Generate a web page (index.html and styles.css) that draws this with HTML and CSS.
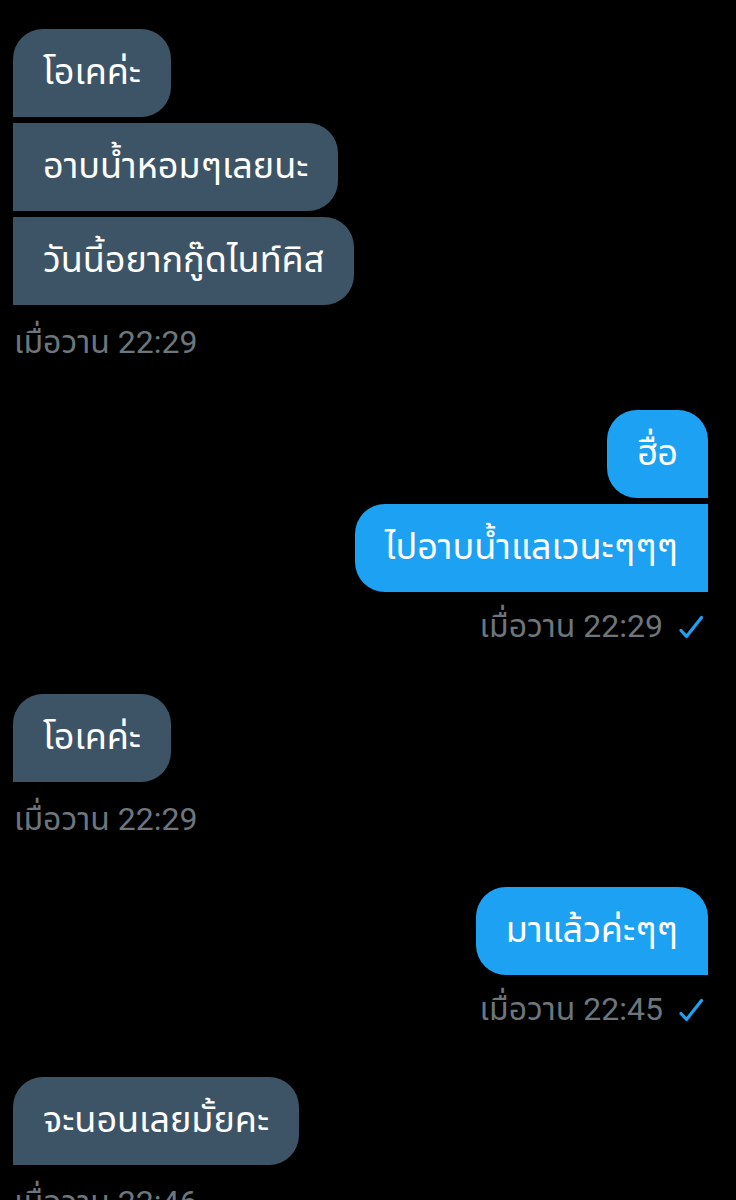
FILE: index.html
```html
<!DOCTYPE html>
<html lang="th">
<head>
  <meta charset="UTF-8">
  <title>Messages</title>
  <link rel="stylesheet" href="styles.css">
</head>
<body>
  <div class="chat">
    <div class="group received">
      <div class="bubble first">โอเคค่ะ</div>
      <div class="bubble">อาบน้ำหอมๆเลยนะ</div>
      <div class="bubble">วันนี้อยากกู๊ดไนท์คิส</div>
      <div class="time">เมื่อวาน 22:29</div>
    </div>

    <div class="group sent">
      <div class="bubble first">ฮื่อ</div>
      <div class="bubble">ไปอาบน้ำแลเวนะๆๆๆ</div>
      <div class="time">เมื่อวาน 22:29
        <svg class="check" viewBox="0 0 24 24"><path d="M2 15.5 L7.5 21.5 L22.5 2.5"/></svg>
      </div>
    </div>

    <div class="group received">
      <div class="bubble first">โอเคค่ะ</div>
      <div class="time">เมื่อวาน 22:29</div>
    </div>

    <div class="group sent">
      <div class="bubble first">มาแล้วค่ะๆๆ</div>
      <div class="time">เมื่อวาน 22:45
        <svg class="check" viewBox="0 0 24 24"><path d="M2 15.5 L7.5 21.5 L22.5 2.5"/></svg>
      </div>
    </div>

    <div class="group received">
      <div class="bubble first">จะนอนเลยมั้ยคะ</div>
      <div class="time">เมื่อวาน 22:46</div>
    </div>
  </div>
</body>
</html>
```

FILE: styles.css
```css
html, body {
  margin: 0;
  background: #000;
}
body {
  font-family: Roboto, "Noto Sans", "Noto Sans Thai", sans-serif;
  overflow: hidden;
  height: 1200px;
}
.chat {
  display: flex;
  flex-direction: column;
  padding: 29px 28px 0 13px;
}
.group {
  display: flex;
  flex-direction: column;
  gap: 6px;
  margin-bottom: 45px;
}
.received {
  align-items: flex-start;
}
.sent {
  align-items: flex-end;
}
.bubble {
  height: 88px;
  box-sizing: border-box;
  display: flex;
  align-items: center;
  padding: 0 30px;
  font-size: 36px;
  color: #fff;
  white-space: nowrap;
}
.received .bubble {
  background: #3d5466;
  border-radius: 0 30px 30px 0;
}
.received .bubble.first {
  border-radius: 30px 30px 30px 0;
}
.sent .bubble {
  background: #1da1f2;
  border-radius: 30px 0 0 30px;
}
.sent .bubble.first {
  border-radius: 30px 30px 0 30px;
}
.time {
  display: flex;
  align-items: center;
  height: 44px;
  margin-top: 10px;
  padding-left: 1px;
  font-size: 32px;
  color: #6e767d;
  white-space: nowrap;
}
.sent .time {
  margin-top: 7px;
}
.check {
  width: 24px;
  height: 24px;
  margin-left: 16px;
  margin-right: 5px;
  fill: none;
  stroke: #1da1f2;
  stroke-width: 3.2;
  stroke-linecap: round;
  stroke-linejoin: round;
}
```
